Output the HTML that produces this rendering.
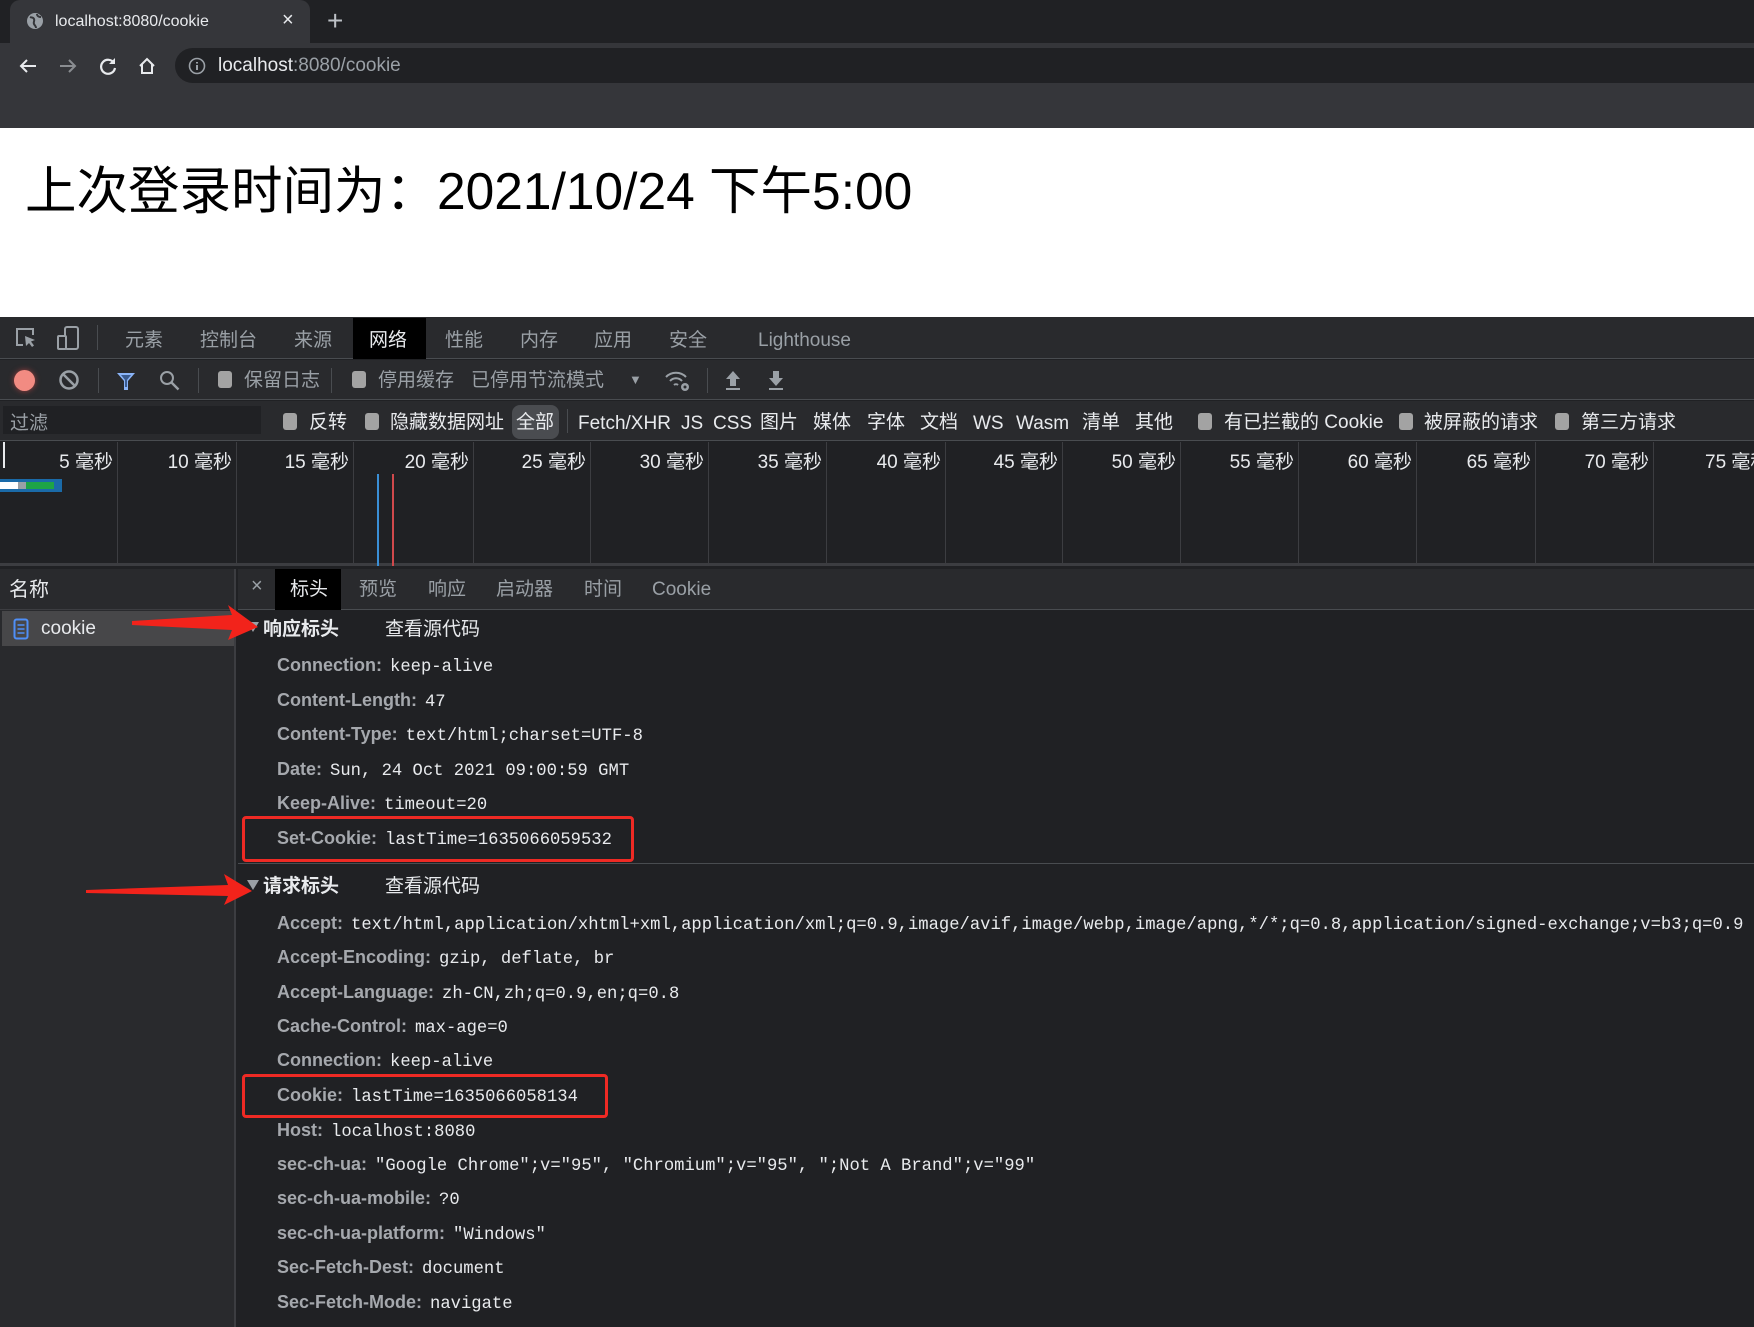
<!DOCTYPE html>
<html><head><meta charset="utf-8">
<style>
*{margin:0;padding:0;box-sizing:border-box}
body{width:1754px;height:1327px;overflow:hidden;background:#202124;position:relative;font-family:"Liberation Sans","Noto Sans CJK SC",sans-serif;}
.a{position:absolute;white-space:nowrap}
.t{font-size:19px;color:#9aa0a6;line-height:24px}
.w{color:#e8eaed}
.cb{position:absolute;width:14px;height:17px;background:#a3a3a3;border-radius:3px}
.vl{position:absolute;width:1px;background:#3c3d41}
.k{position:absolute;left:277px;font-size:18px;font-weight:bold;color:#a5a8ad;white-space:nowrap;line-height:24px;font-family:"Liberation Sans","Noto Sans CJK SC",sans-serif}
.k b{font-family:"Liberation Mono",monospace;font-weight:normal;color:#e8eaed;font-size:17.2px;margin-left:8px}
.lab{position:absolute;top:451px;font-size:19px;color:#e8eaed;text-align:right;width:110px;line-height:24px;white-space:nowrap}
</style></head><body>
<!-- browser chrome -->
<div class="a" style="left:0;top:0;width:1754px;height:43px;background:#202124"></div>
<div class="a" style="left:10px;top:0;width:300px;height:44px;background:#35363a;border-radius:10px 10px 0 0"></div>
<svg class="a" style="left:26px;top:12px" width="18" height="18" viewBox="0 0 18 18"><circle cx="9" cy="9" r="8" fill="#9aa0a6"/><path d="M4 5c2 1 3 0 4 2s-1 3 0 5 2 2 2 4M11 2c0 2 2 3 4 3" stroke="#35363a" stroke-width="2" fill="none"/></svg>
<div class="a" style="left:55px;top:13px;font-size:16px;color:#e8eaed">localhost:8080/cookie</div>
<div class="a" style="left:282px;top:9px;font-size:20px;color:#e8eaed">×</div>
<div class="a" style="left:327px;top:5px;font-size:28px;color:#bdc1c6;font-weight:300">+</div>
<div class="a" style="left:0;top:43px;width:1754px;height:85px;background:#35363a"></div>
<div class="a" style="left:175px;top:48px;width:1600px;height:35px;background:#202124;border-radius:18px"></div>
<svg class="a" style="left:16px;top:54px" width="24" height="24" viewBox="0 0 24 24"><path d="M20 12H5M11 6l-6 6 6 6" stroke="#e8eaed" stroke-width="2" fill="none"/></svg>
<svg class="a" style="left:56px;top:54px" width="24" height="24" viewBox="0 0 24 24"><path d="M4 12h15M13 6l6 6-6 6" stroke="#8a8d91" stroke-width="2" fill="none"/></svg>
<svg class="a" style="left:96px;top:54px" width="24" height="24" viewBox="0 0 24 24"><path d="M18 9A7 7 0 1 0 19 14" stroke="#e8eaed" stroke-width="2.2" fill="none"/><path d="M19 4v6h-6z" fill="#e8eaed"/></svg>
<svg class="a" style="left:135px;top:54px" width="24" height="24" viewBox="0 0 24 24"><path d="M5 12l7-7 7 7M7 10v9h10v-9" stroke="#e8eaed" stroke-width="2" fill="none"/></svg>
<svg class="a" style="left:188px;top:57px" width="18" height="18" viewBox="0 0 18 18"><circle cx="9" cy="9" r="7.5" stroke="#9aa0a6" stroke-width="1.6" fill="none"/><path d="M9 8v5M9 5v1.5" stroke="#9aa0a6" stroke-width="2"/></svg>
<div class="a" style="left:218px;top:55px;font-size:19px;color:#e8eaed">localhost<span style="color:#9aa0a6">:8080/cookie</span></div>
<!-- page -->
<div class="a" style="left:0;top:128px;width:1754px;height:189px;background:#fff"></div>
<div class="a" style="left:25px;top:158px;font-size:51.5px;color:#000;line-height:66px">上次登录时间为：2021/10/24 下午5:00</div>
<!-- devtools tabs -->
<div class="a" style="left:0;top:317px;width:1754px;height:42px;background:#292a2d;border-bottom:1px solid #494c50"></div>
<svg class="a" style="left:14px;top:326px" width="24" height="24" viewBox="0 0 24 24"><path d="M9 19H3V3h16v6" stroke="#9aa0a6" stroke-width="2" fill="none"/><path d="M11 10l10 4-4 1.5 3 4-2 1.5-3-4-3 3z" fill="#9aa0a6"/></svg>
<svg class="a" style="left:55px;top:325px" width="26" height="26" viewBox="0 0 26 26"><rect x="10" y="2" width="13" height="22" rx="2" stroke="#9aa0a6" stroke-width="2" fill="none"/><rect x="3" y="11" width="8" height="13" rx="1" stroke="#9aa0a6" stroke-width="2" fill="#292a2d"/></svg>
<div class="vl" style="left:97px;top:325px;height:25px;background:#494c50"></div>
<div class="a" style="left:353px;top:318px;width:73px;height:41px;background:#000"></div>
<div class="a t" style="left:125px;top:329px">元素</div>
<div class="a t" style="left:200px;top:329px">控制台</div>
<div class="a t" style="left:294px;top:329px">来源</div>
<div class="a t w" style="left:369px;top:329px">网络</div>
<div class="a t" style="left:445px;top:329px">性能</div>
<div class="a t" style="left:520px;top:329px">内存</div>
<div class="a t" style="left:594px;top:329px">应用</div>
<div class="a t" style="left:669px;top:329px">安全</div>
<div class="a t" style="left:758px;top:329px">Lighthouse</div>
<!-- toolbar -->
<div class="a" style="left:0;top:360px;width:1754px;height:40px;background:#292a2d;border-bottom:1px solid #494c50"></div>
<div class="a" style="left:14px;top:370px;width:21px;height:21px;border-radius:50%;background:#f28b82;box-shadow:0 0 6px #a04040"></div>
<svg class="a" style="left:58px;top:369px" width="22" height="22" viewBox="0 0 22 22"><circle cx="11" cy="11" r="8.5" stroke="#9aa0a6" stroke-width="2.5" fill="none"/><path d="M5 5l12 12" stroke="#9aa0a6" stroke-width="2.5"/></svg>
<div class="vl" style="left:98px;top:368px;height:25px;background:#494c50"></div>
<svg class="a" style="left:115px;top:370px" width="22" height="22" viewBox="0 0 22 22"><path d="M2 3h18l-7 8v9h-4v-9z" fill="#8ab4f8"/><path d="M6 5h10l-4 5v7h-2v-7z" fill="#3a5b8f"/></svg>
<svg class="a" style="left:158px;top:369px" width="24" height="24" viewBox="0 0 24 24"><circle cx="9" cy="9" r="6" stroke="#9aa0a6" stroke-width="2" fill="none"/><path d="M13.5 13.5l7 7" stroke="#9aa0a6" stroke-width="2.4"/></svg>
<div class="vl" style="left:198px;top:368px;height:25px;background:#494c50"></div>
<div class="cb" style="left:218px;top:371px"></div>
<div class="a t" style="left:244px;top:369px">保留日志</div>
<div class="vl" style="left:331px;top:368px;height:25px;background:#494c50"></div>
<div class="cb" style="left:352px;top:371px"></div>
<div class="a t" style="left:378px;top:369px">停用缓存</div>
<div class="a t" style="left:471px;top:369px">已停用节流模式</div>
<div class="a" style="left:629px;top:372px;font-size:13px;color:#9aa0a6">▼</div>
<svg class="a" style="left:664px;top:369px" width="28" height="24" viewBox="0 0 28 24"><path d="M2 8a14 14 0 0 1 20 0M6 12a8 8 0 0 1 12 0M10 16a3 3 0 0 1 4 0" stroke="#9aa0a6" stroke-width="2" fill="none"/><circle cx="21" cy="18" r="4" fill="#9aa0a6"/><circle cx="21" cy="18" r="1.5" fill="#292a2d"/></svg>
<div class="vl" style="left:707px;top:368px;height:25px;background:#494c50"></div>
<svg class="a" style="left:723px;top:369px" width="20" height="22" viewBox="0 0 20 22"><path d="M10 2l-7 8h4v7h6v-7h4z M3 19h14v2H3z" fill="#9aa0a6"/></svg>
<svg class="a" style="left:766px;top:369px" width="20" height="22" viewBox="0 0 20 22"><path d="M10 17l-7-8h4V2h6v7h4z M3 19h14v2H3z" fill="#9aa0a6"/></svg>
<!-- filter row -->
<div class="a" style="left:0;top:401px;width:1754px;height:40px;background:#292a2d;border-bottom:1px solid #494c50"></div>
<div class="a" style="left:3px;top:406px;width:258px;height:28px;background:#202124"></div>
<div class="a t" style="left:10px;top:412px">过滤</div>
<div class="cb" style="left:283px;top:413px"></div><div class="a t w" style="left:309px;top:411px">反转</div>
<div class="cb" style="left:365px;top:413px"></div><div class="a t w" style="left:390px;top:411px">隐藏数据网址</div>
<div class="a" style="left:512px;top:405px;width:47px;height:34px;background:#4a4c50;border-radius:8px"></div>
<div class="a t w" style="left:516px;top:411px">全部</div>
<div class="vl" style="left:567px;top:409px;height:24px;background:#494c50"></div>
<div class="a t w" style="left:578px;top:412px">Fetch/XHR</div>
<div class="a t w" style="left:681px;top:412px">JS</div>
<div class="a t w" style="left:713px;top:412px">CSS</div>
<div class="a t w" style="left:760px;top:411px">图片</div>
<div class="a t w" style="left:813px;top:411px">媒体</div>
<div class="a t w" style="left:867px;top:411px">字体</div>
<div class="a t w" style="left:920px;top:411px">文档</div>
<div class="a t w" style="left:973px;top:412px">WS</div>
<div class="a t w" style="left:1016px;top:412px">Wasm</div>
<div class="a t w" style="left:1082px;top:411px">清单</div>
<div class="a t w" style="left:1135px;top:411px">其他</div>
<div class="cb" style="left:1198px;top:413px"></div><div class="a t w" style="left:1224px;top:411px">有已拦截的 Cookie</div>
<div class="cb" style="left:1399px;top:413px"></div><div class="a t w" style="left:1424px;top:411px">被屏蔽的请求</div>
<div class="cb" style="left:1555px;top:413px"></div><div class="a t w" style="left:1581px;top:411px">第三方请求</div>
<!-- timeline -->
<div class="a" style="left:0;top:442px;width:1754px;height:124px;background:#202124;border-bottom:3px solid #3c3d41"></div>
<div class="a" style="left:3px;top:442px;width:2px;height:26px;background:#e8eaed"></div>
<div class="vl" style="left:117px;top:442px;height:124px"></div>
<div class="vl" style="left:236px;top:442px;height:124px"></div>
<div class="vl" style="left:353px;top:442px;height:124px"></div>
<div class="vl" style="left:473px;top:442px;height:124px"></div>
<div class="vl" style="left:590px;top:442px;height:124px"></div>
<div class="vl" style="left:708px;top:442px;height:124px"></div>
<div class="vl" style="left:826px;top:442px;height:124px"></div>
<div class="vl" style="left:945px;top:442px;height:124px"></div>
<div class="vl" style="left:1062px;top:442px;height:124px"></div>
<div class="vl" style="left:1180px;top:442px;height:124px"></div>
<div class="vl" style="left:1298px;top:442px;height:124px"></div>
<div class="vl" style="left:1416px;top:442px;height:124px"></div>
<div class="vl" style="left:1535px;top:442px;height:124px"></div>
<div class="vl" style="left:1653px;top:442px;height:124px"></div>
<div class="lab" style="left:3px">5 毫秒</div>
<div class="lab" style="left:122px">10 毫秒</div>
<div class="lab" style="left:239px">15 毫秒</div>
<div class="lab" style="left:359px">20 毫秒</div>
<div class="lab" style="left:476px">25 毫秒</div>
<div class="lab" style="left:594px">30 毫秒</div>
<div class="lab" style="left:712px">35 毫秒</div>
<div class="lab" style="left:831px">40 毫秒</div>
<div class="lab" style="left:948px">45 毫秒</div>
<div class="lab" style="left:1066px">50 毫秒</div>
<div class="lab" style="left:1184px">55 毫秒</div>
<div class="lab" style="left:1302px">60 毫秒</div>
<div class="lab" style="left:1421px">65 毫秒</div>
<div class="lab" style="left:1539px">70 毫秒</div>
<div class="a" style="left:1705px;top:451px;font-size:19px;line-height:24px;color:#e8eaed">75 毫秒</div>
<div class="a" style="left:0;top:479px;width:62px;height:13px;background:#1a6aa8"></div>
<div class="a" style="left:0;top:482px;width:18px;height:7px;background:#fff"></div>
<div class="a" style="left:18px;top:482px;width:8px;height:7px;background:#9aa0a6"></div>
<div class="a" style="left:26px;top:482px;width:28px;height:7px;background:#1ea446"></div>
<div class="a" style="left:377px;top:474px;width:2px;height:92px;background:#3a8fd6"></div>
<div class="a" style="left:392px;top:474px;width:2px;height:92px;background:#d0494c"></div>
<!-- left panel -->
<div class="a" style="left:0;top:569px;width:236px;height:758px;background:#292a2d;border-right:2px solid #3c3d41"></div>
<div class="a" style="left:0;top:609px;width:236px;height:1px;background:#3c3d41"></div>
<div class="a t w" style="left:9px;top:578px;font-size:20px">名称</div>
<div class="a" style="left:2px;top:611px;width:232px;height:35px;background:#474749"></div>
<svg class="a" style="left:13px;top:618px" width="16" height="22" viewBox="0 0 16 22"><rect x="1.5" y="1.5" width="13" height="19" rx="2" stroke="#4f8ff7" stroke-width="2" fill="none"/><path d="M4.5 7h7M4.5 11h7M4.5 15h7" stroke="#4f8ff7" stroke-width="1.6"/></svg>
<div class="a w" style="left:41px;top:618px;font-size:19px">cookie</div>
<!-- right panel -->
<div class="a" style="left:238px;top:569px;width:1516px;height:41px;background:#292a2d;border-bottom:1px solid #494c50"></div>
<div class="a" style="left:251px;top:575px;font-size:20px;color:#9aa0a6">×</div>
<div class="a" style="left:275px;top:569px;width:66px;height:41px;background:#000"></div>
<div class="a t w" style="left:290px;top:578px">标头</div>
<div class="a t" style="left:359px;top:578px">预览</div>
<div class="a t" style="left:428px;top:578px">响应</div>
<div class="a t" style="left:496px;top:578px">启动器</div>
<div class="a t" style="left:584px;top:578px">时间</div>
<div class="a t" style="left:652px;top:578px">Cookie</div>

<svg class="a" style="left:247px;top:622px" width="12" height="10" viewBox="0 0 12 10"><path d="M0 0h12L6 10z" fill="#9aa0a6"/></svg>
<div class="a" style="left:263px;top:614px;font-size:19px;font-weight:bold;color:#e8eaed">响应标头</div>
<div class="a w" style="left:385px;top:614px;font-size:19px">查看源代码</div>
<div class="k" style="top:653px">Connection:<b>keep-alive</b></div>
<div class="k" style="top:688px">Content-Length:<b>47</b></div>
<div class="k" style="top:722px">Content-Type:<b>text/html;charset=UTF-8</b></div>
<div class="k" style="top:757px">Date:<b>Sun, 24 Oct 2021 09:00:59 GMT</b></div>
<div class="k" style="top:791px">Keep-Alive:<b>timeout=20</b></div>
<div class="k" style="top:826px">Set-Cookie:<b>lastTime=1635066059532</b></div>
<div class="a" style="left:242px;top:816px;width:392px;height:46px;border:3px solid #ee2a24;border-radius:4px"></div>
<div class="a" style="left:238px;top:863px;width:1516px;height:1px;background:#494c50"></div>

<svg class="a" style="left:247px;top:880px" width="12" height="10" viewBox="0 0 12 10"><path d="M0 0h12L6 10z" fill="#9aa0a6"/></svg>
<div class="a" style="left:263px;top:871px;font-size:19px;font-weight:bold;color:#e8eaed">请求标头</div>
<div class="a w" style="left:385px;top:871px;font-size:19px">查看源代码</div>
<div class="k" style="top:911px">Accept:<b>text/html,application/xhtml+xml,application/xml;q=0.9,image/avif,image/webp,image/apng,*/*;q=0.8,application/signed-exchange;v=b3;q=0.9</b></div>
<div class="k" style="top:945px">Accept-Encoding:<b>gzip, deflate, br</b></div>
<div class="k" style="top:980px">Accept-Language:<b>zh-CN,zh;q=0.9,en;q=0.8</b></div>
<div class="k" style="top:1014px">Cache-Control:<b>max-age=0</b></div>
<div class="k" style="top:1048px">Connection:<b>keep-alive</b></div>
<div class="k" style="top:1083px">Cookie:<b>lastTime=1635066058134</b></div>
<div class="a" style="left:242px;top:1074px;width:366px;height:44px;border:3px solid #ee2a24;border-radius:4px"></div>
<div class="k" style="top:1118px">Host:<b>localhost:8080</b></div>
<div class="k" style="top:1152px">sec-ch-ua:<b>"Google Chrome";v="95", "Chromium";v="95", ";Not A Brand";v="99"</b></div>
<div class="k" style="top:1186px">sec-ch-ua-mobile:<b>?0</b></div>
<div class="k" style="top:1221px">sec-ch-ua-platform:<b>"Windows"</b></div>
<div class="k" style="top:1255px">Sec-Fetch-Dest:<b>document</b></div>
<div class="k" style="top:1290px">Sec-Fetch-Mode:<b>navigate</b></div>
<!-- arrows -->
<svg class="a" style="left:0;top:0" width="1754" height="1327" viewBox="0 0 1754 1327">
<polygon points="132,621 232,615 228,605 258,627 228,640 232,630 132,625" fill="#f2231b"/>
<polygon points="86,890 228,885 224,874 252,891 224,905 228,896 86,893" fill="#f2231b"/>
</svg>
</body></html>
